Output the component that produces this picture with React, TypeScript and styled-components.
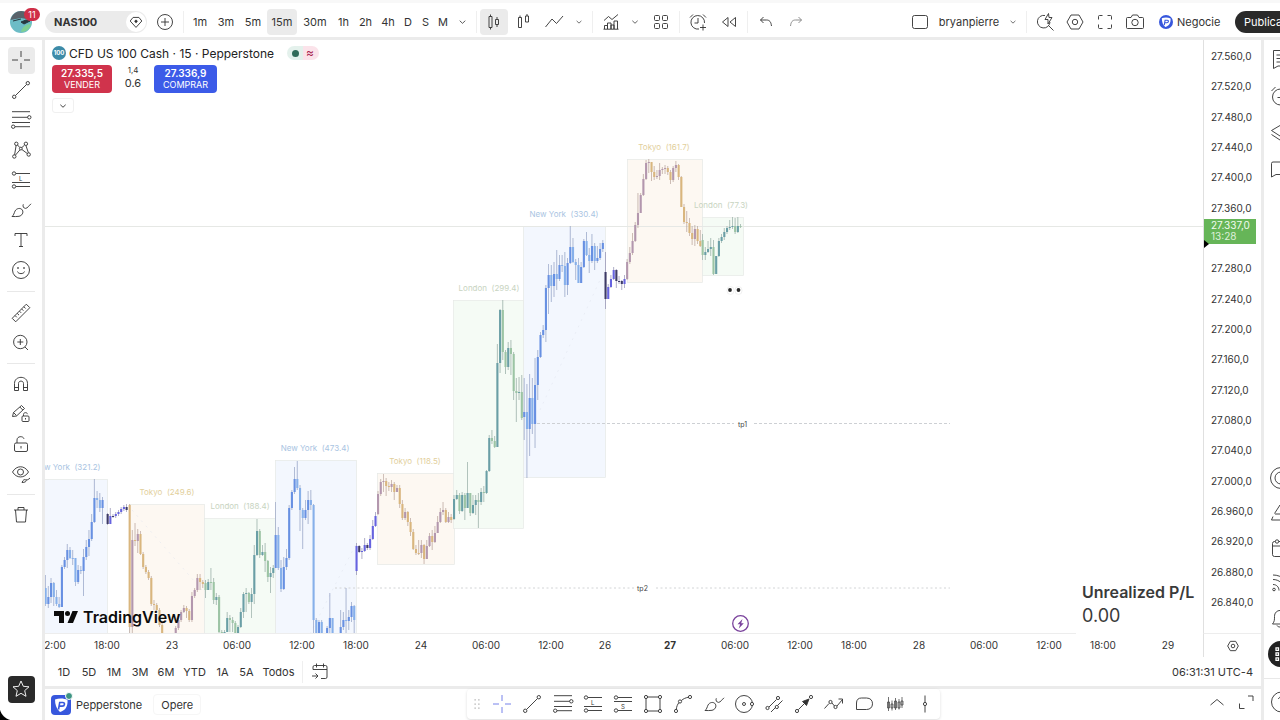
import React from "react";
import styled, { createGlobalStyle, css } from "styled-components";

const GlobalStyle = createGlobalStyle`
  * { box-sizing: border-box; }
  html, body { margin: 0; padding: 0; }
  body {
    background: #ebebeb;
    color: #333;
    font-family: Inter, "Liberation Sans", sans-serif;
    font-size: 11px;
    overflow: hidden;
  }
  button { font: inherit; color: inherit; background: none; border: 0; padding: 0; margin: 0; cursor: pointer; }
`;

/* ---------- shell ---------- */

const Shell = styled.div`
  display: flex;
  flex-direction: column;
  height: 100vh;
  background: #ebebeb;
`;

const Workspace = styled.div`
  display: flex;
  flex: 1;
  min-height: 0;
  gap: 3px;
  padding-top: 3px;
`;

const Center = styled.main`
  display: flex;
  flex: 1;
  min-width: 0;
  flex-direction: column;
  gap: 3px;
`;

/* ---------- top bar ---------- */

const TopBar = styled.header`
  display: flex;
  align-items: center;
  height: 37px;
  padding-top: 3px;
  background: #fff;
  border-top: 3px solid #f8f8f8;
  overflow: hidden;
`;

const Tool = styled.button<{ $w?: number; $active?: boolean; $faded?: boolean }>`
  display: inline-flex;
  flex: none;
  align-items: center;
  justify-content: center;
  width: ${(p) => p.$w ?? 28}px;
  height: 26px;
  border-radius: 4px;
  white-space: nowrap;
  background: ${(p) => (p.$active ? "#ebebeb" : "transparent")};
  opacity: ${(p) => (p.$faded ? 0.6 : 1)};
`;

const Sep = styled.span<{ $side?: number }>`
  flex: none;
  width: 1px;
  height: 22px;
  margin: 0 ${(p) => p.$side ?? 4}px;
  background: #efefef;
`;

const Cluster = styled.div<{ $gap?: number; $left?: number }>`
  display: flex;
  align-items: center;
  gap: ${(p) => p.$gap ?? 0}px;
  margin-left: ${(p) => p.$left ?? 0}px;
`;

const Spacer = styled.span`
  flex: 1;
`;

const Account = styled.button`
  position: relative;
  flex: none;
  width: 45px;
  height: 26px;
  padding-left: 9px;
  text-align: left;
  svg { display: block; }
`;

const Count = styled.span`
  position: absolute;
  left: 24px;
  top: -1px;
  min-width: 16px;
  height: 13px;
  border-radius: 7px;
  background: #cf2f48;
  color: #fff;
  font-size: 9px;
  line-height: 13px;
  text-align: center;
`;

const SymbolPill = styled.button`
  display: flex;
  flex: none;
  align-items: center;
  justify-content: space-between;
  width: 102px;
  height: 22px;
  padding: 0 1px 0 9px;
  border-radius: 11px;
  background: #ebebeb;
  font-weight: 700;
`;

const GemSpot = styled.span`
  display: flex;
  align-items: center;
  justify-content: center;
  width: 20px;
  height: 20px;
  border-radius: 10px;
  background: #fff;
`;

const Negotiate = styled.button`
  display: flex;
  flex: none;
  align-items: center;
  gap: 4px;
  width: 70px;
  height: 24px;
  margin: 0 6px 0 10px;
`;

const Publish = styled.button`
  flex: none;
  width: 45px;
  height: 22px;
  padding-left: 9px;
  border-radius: 11px 0 0 11px;
  background: #2a2a2a;
  color: #fff;
  text-align: left;
  white-space: nowrap;
  overflow: hidden;
`;

/* ---------- side rails ---------- */

const LeftRail = styled.nav`
  display: flex;
  flex: none;
  flex-direction: column;
  align-items: center;
  width: 42px;
  padding: 5px 0 16px;
  background-color: #fff;
  background-image: radial-gradient(circle at 14px 0, transparent 14px, #000 15px);
  background-position: left bottom;
  background-size: 14px 14px;
  background-repeat: no-repeat;
`;

const RailTool = styled.button`
  display: flex;
  flex: none;
  align-items: center;
  justify-content: center;
  width: 42px;
  height: 30px;
`;

const RailFace = styled.span<{ $tone?: "soft" | "dark" }>`
  display: flex;
  align-items: center;
  justify-content: center;
  width: 27px;
  height: 27px;
  border-radius: 4px;
  ${(p) => p.$tone === "soft" && css`background: #ebebeb;`}
  ${(p) => p.$tone === "dark" && css`background: #2a2a2a; color: #fff;`}
`;

const RailRule = styled.hr<{ $room?: number }>`
  flex: none;
  width: 28px;
  height: 1px;
  margin: ${(p) => p.$room ?? 5}px 0;
  border: 0;
  background: #e8e8e8;
`;

const RightRail = styled.nav`
  display: flex;
  flex: none;
  flex-direction: column;
  width: 16px;
  background: #fff;
  overflow: hidden;
`;

const RailGroup = styled.div`
  display: flex;
  flex-direction: column;
`;

const SideTool = styled.button<{ $h?: number }>`
  display: flex;
  align-items: center;
  width: 32px;
  height: ${(p) => p.$h ?? 37}px;
  padding-left: 4px;
`;

const MoreDot = styled.span`
  display: flex;
  flex: none;
  align-items: center;
  justify-content: center;
  width: 26px;
  height: 26px;
  border-radius: 13px;
  background: #222;
  color: #fff;
`;

/* ---------- chart card ---------- */

const ChartCard = styled.section`
  display: flex;
  flex: 1;
  min-height: 0;
  flex-direction: column;
  background: #fff;
`;

const PlotRow = styled.div`
  display: flex;
  flex: 1;
  min-height: 0;
`;

const Plot = styled.div`
  position: relative;
  flex: 1;
  min-width: 0;
  border-right: 1px solid #e0e0e0;
  border-bottom: 1px solid #ededed;
`;

const Canvas = styled.svg`
  display: block;
  width: 100%;
  height: 100%;
  overflow: hidden;
`;

const Legend = styled.div`
  position: absolute;
  left: 7px;
  top: 5px;
`;

const TitleLine = styled.div`
  display: flex;
  align-items: center;
  gap: 3px;
  height: 16px;
  font-size: 12px;
  color: #222;
`;

const IndexMark = styled.span`
  width: 14px;
  height: 14px;
  border-radius: 7px;
  background: #3d8ba8;
  color: #fff;
  font-size: 6px;
  font-weight: 700;
  line-height: 14px;
  text-align: center;
`;

const Status = styled.span`
  display: flex;
  align-items: center;
  width: 32px;
  height: 14px;
  margin-left: 10px;
  border-radius: 7px;
  background: linear-gradient(90deg, #e4f1ec 50%, #fbe3ea 50%);
`;

const OpenDot = styled.i`
  width: 7px;
  height: 7px;
  margin: 0 7px 0 5px;
  border-radius: 4px;
  background: #2f6b59;
`;

const Delay = styled.span`
  color: #a82350;
  font-size: 12px;
  line-height: 14px;
`;

const Quotes = styled.div`
  display: flex;
  align-items: center;
  height: 28px;
  margin-top: 4px;
`;

const Quote = styled.button<{ $side: "sell" | "buy" }>`
  width: ${(p) => (p.$side === "sell" ? 60 : 63)}px;
  height: 28px;
  border-radius: 4px;
  background: ${(p) => (p.$side === "sell" ? "#d0334c" : "#3c5be8")};
  color: #fff;
  font-size: 9px;
  line-height: 11px;
  b { display: block; font-size: 10px; font-weight: 600; }
`;

const Spread = styled.div`
  width: 42px;
  text-align: center;
  font-size: 11px;
  line-height: 15px;
  small { display: block; margin-top: -3px; font-size: 8px; line-height: 12px; }
`;

const Fold = styled.button`
  display: flex;
  align-items: center;
  justify-content: center;
  width: 22px;
  height: 15px;
  margin-top: 5px;
  border: 1px solid #f0f0f0;
  border-radius: 3px;
  background: #fff;
`;

const Brand = styled.a`
  position: absolute;
  left: 9px;
  bottom: 6px;
  display: flex;
  align-items: center;
  gap: 4px;
  color: #0c0c0c;
  font-size: 16px;
  font-weight: 600;
  line-height: 20px;
  text-decoration: none;
`;

const Profit = styled.div`
  position: absolute;
  right: 0;
  bottom: -1px;
  width: 127px;
  height: 54px;
  padding-left: 6px;
  background: #fff;
  font-size: 18px;
  line-height: 22px;
  color: #3a3a3a;
  strong { display: block; font-size: 16px; font-weight: 600; line-height: 25px; white-space: nowrap; }
`;

const PriceAxis = styled.div`
  position: relative;
  display: flex;
  flex: none;
  flex-direction: column;
  justify-content: space-between;
  width: 57px;
  padding: 9px 0 23px 7px;
  border-bottom: 1px solid #ededed;
  font-size: 10px;
  line-height: 15px;
`;

const PriceSlot = styled.span`
  height: 15px;
`;

const LastPrice = styled.div`
  position: absolute;
  left: 0;
  top: 179px;
  width: 52px;
  height: 25px;
  padding: 1px 0 0 7px;
  background: #66b558;
  color: #f2fbf0;
  font-size: 10px;
  line-height: 11px;
  span { display: block; opacity: 0.85; }
`;

const AxisArrow = styled.svg`
  position: absolute;
  left: 0;
  top: 199px;
`;

const TimeRow = styled.div`
  display: flex;
  flex: none;
  height: 23px;
`;

const TimeAxis = styled.div`
  display: flex;
  flex: 1;
  min-width: 0;
  padding-left: 8px;
  overflow: hidden;
  border-right: 1px solid #e0e0e0;
  font-size: 10px;
  line-height: 23px;
`;

const Tick = styled.span<{ $w: number; $strong?: boolean }>`
  flex: 0 0 ${(p) => p.$w}px;
  font-weight: ${(p) => (p.$strong ? 700 : 400)};
  span { display: inline-block; transform: translateX(-50%); }
`;

const AxisGear = styled.button`
  display: flex;
  flex: none;
  align-items: center;
  justify-content: center;
  width: 57px;
`;

const RangeRow = styled.div`
  display: flex;
  flex: none;
  align-items: center;
  height: 29px;
  padding: 0 8px 0 6px;
`;

const Clock = styled.button`
  white-space: nowrap;
`;

/* ---------- bottom bar ---------- */

const BottomBar = styled.footer`
  display: flex;
  flex: none;
  height: 31px;
  background: #fff;
`;

const Broker = styled.div`
  display: flex;
  flex: none;
  align-items: center;
  width: 422px;
  padding-left: 5px;
`;

const BrokerName = styled.button`
  display: flex;
  align-items: center;
  gap: 4px;
`;

const Operate = styled.button`
  width: 48px;
  height: 21px;
  margin-left: 11px;
  border: 1px solid #f6f6f6;
  border-radius: 4px;
`;

const Favorites = styled.div`
  display: flex;
  flex: none;
  align-items: center;
  justify-content: space-between;
  width: 473px;
  height: 30px;
  border-radius: 4px;
  background: #fff;
  box-shadow: 0 1px 3px rgba(0, 0, 0, 0.14);
`;

const FavTool = styled(Tool)<{ $blue?: boolean }>`
  color: ${(p) => (p.$blue ? "#6a76e8" : "inherit")};
`;

/* ---------- icons ---------- */

const Svg = ({ children, size = 24 }: { children: React.ReactNode; size?: number }) => (
  <svg width={size} height={size} viewBox="0 0 24 24" fill="none" stroke="currentColor" strokeWidth={22 / size} strokeLinecap="butt" aria-hidden="true">
    {children}
  </svg>
);

const icons: Record<string, React.ReactNode> = {
  cross: <path d="M12 3v6M12 15v6M3 12h6M15 12h6" />,
  trend: <><circle cx="5.2" cy="18.8" r="1.7" /><circle cx="18.8" cy="5.2" r="1.7" /><path d="M6.5 17.500l11-11" /></>,
  fib: <><path d="M3 3.700h18M3 9.300h15.600M3 14.500h18M6 18.700h15" /><circle cx="20.300" cy="9.300" r="1.700" /><circle cx="4.200" cy="18.700" r="1.700" /></>,
  pattern: <><path d="M5.600 16.800l1.500-9.300M8.500 7l2.300 2.500M12.800 9.600l2.700-2.400M17 7.800l2.400 7M6.400 17.200l4.600-5.400M12.900 11.500l5.600 4.200" /><circle cx="5.300" cy="18.500" r="1.700" /><circle cx="7.300" cy="5.800" r="1.700" /><circle cx="11.800" cy="10.600" r="1.400" /><circle cx="16.900" cy="5.800" r="1.700" /><circle cx="19.700" cy="16.500" r="1.700" /></>,
  long: <><path d="M7 5.500h14M3 14.500h18M7 18.500h14" /><circle cx="5" cy="5.500" r="1.700" /><circle cx="5" cy="18.500" r="1.700" /><text x="10" y="12.500" fontSize="6" fill="currentColor" stroke="none">L</text></>,
  short: <><path d="M7 5.500h14M3 9.500h18M7 18.500h14" /><circle cx="5" cy="5.500" r="1.700" /><circle cx="5" cy="18.500" r="1.700" /><text x="10" y="16.500" fontSize="6" fill="currentColor" stroke="none">S</text></>,
  brush: <path d="M3 18.500c1.800-1.400 2-3.200 3-5.400 1.500-3 5.800-3.600 7.400-1 1.400 2.600-.4 5.600-3.400 6.200-2.300.4-4.500.2-7 .2zM14.300 6.300c-.8 2 .2 4 2.200 4.100 2.200-.2 3.600-3 5.500-4.600" />,
  text: <path d="M6 8V5.500h12V8M12 5.500v13M10 18.500h4" />,
  smile: <><circle cx="12" cy="12" r="8.500" /><path d="M8.500 13.500c.6 2.800 6.400 2.800 7 0" /><path d="M9 9.200v1.600M15 9.200v1.600" strokeWidth="1.500" /></>,
  ruler: <><path d="M3.200 17.300L17.300 3.200l3.500 3.500L6.700 20.800z" strokeLinejoin="round" /><path d="M6 14.500l1.800 1.800M8.200 12.300l1.800 1.800M10.400 10.100l1.800 1.800M12.600 7.900l1.800 1.800M14.800 5.700l1.800 1.800" /></>,
  zoom: <><circle cx="11.300" cy="11" r="6.700" /><path d="M16 16l3 3M11.300 8v6M8.300 11h6" /></>,
  magnet: <path d="M5.500 18.500v-7c0-8.200 13-8.200 13 0v7h-4v-7c0-3.200-5-3.200-5 0v7zM5.500 15.500h4M14.500 15.500h4" />,
  pencilLock: <><path d="M3.500 14.500l1-4L12.500 3.500l3 3-8 7.500zM10.800 5l3 3M4.500 10.500l3 3" /><rect x="13" y="14" width="7" height="5.500" rx="1" /><path d="M14.500 14v-1.500c0-2.400 3.600-2.400 4-.4M16.500 16v1.500" /></>,
  lock: <><rect x="5.500" y="11" width="13" height="8.500" rx="1.500" /><path d="M8 11V8c0-4 6-4.400 7-1.200M12 14v2.500" /></>,
  eye: <><path d="M3.500 10c4-7 12-7 16 0-4 6.600-12 6.600-16 0z" /><circle cx="11.500" cy="10" r="3" /><path d="M13 20.500c1-2.800 2.600-3.400 3.800-2.600s0 2.600-3.800 2.600zM17 17.500c1 1 2.500 0 4-1.500" /></>,
  trash: <path d="M5 7h14M6.500 7l1 12h9l1-12M9 7V4.500h6V7" />,
  star: <path d="M12 4l2.300 5.300 5.700.5-4.300 3.800 1.300 5.700-5-3-5 3 1.300-5.700L4 9.800l5.700-.5z" />,
  plus: <><circle cx="12" cy="12" r="7.500" /><path d="M12 8v8M8 12h8" /></>,
  gem: <><path d="M8.500 6.500h7l3.500 4.300-7 7.700-7-7.700z" strokeLinejoin="round" /><path d="M12 9l2.200 2.200L12 13.400l-2.200-2.200z" fill="currentColor" stroke="none" /></>,
  chevron: <path d="M8.800 10.500l3.200 3 3.200-3" />,
  up: <path d="M5.500 15l6.500-5.500L18.500 15" />,
  candles: <path d="M7 6.500h3v11H7zM13.500 9.500h3v5h-3zM8.500 4.500v2M8.500 17.500v2M15 7v2.500M15 14.500V17" />,
  hollow: <path d="M6.500 7.500h3v10h-3zM13.500 6h3v6h-3zM8 5.500v2M15 4v2" />,
  line: <path d="M3.500 17l6.500-8 4.500 4.500L21 6" />,
  indicators: <path d="M5 10.500l4.500-4 3.500 3L19 4.500M5.500 19v-3.500h3V19M8.500 19v-6h3.500v6M12 19v-4h3v4M15 19v-8h3.500v8M4.500 19.200h15" />,
  grid: <><rect x="5.500" y="5.500" width="5" height="5" rx="1" /><rect x="13.500" y="5.500" width="5" height="5" rx="1" /><rect x="5.500" y="13.500" width="5" height="5" rx="1" /><rect x="13.500" y="13.500" width="5" height="5" rx="1" /></>,
  alarm: <path d="M18.500 13A6.800 6.800 0 1 0 13 19M12 8v5H8.500M4 7.500l3-3M20 7.500l-3-3M17 14.500v6M14 17.500h6" />,
  rewind: <path d="M11 7.500v9L5.500 12zM18.500 7.500v9L13 12z" />,
  undo: <path d="M9.500 7L6.500 10l3 3M6.500 10h6c3 0 4.500 1.800 5 6" />,
  redo: <path d="M14.500 7l3 3-3 3M17.500 10h-6c-3 0-4.500 1.800-5 6" />,
  square: <rect x="4.500" y="5.500" width="15" height="13" rx="2" />,
  searchBolt: <path d="M12 5.500a6.300 6.300 0 1 0 5 6.500M16 16l4.500 4.500M15.500 3.500l-3.500 6h3v4.500l4-6.500h-3z" />,
  gear: <><path d="M8 5h8l4 7-4 7H8l-4-7z" strokeLinejoin="round" /><circle cx="12" cy="12" r="2.700" /></>,
  full: <path d="M5.500 9.500v-3a1 1 0 0 1 1-1h3M14.500 5.500h3a1 1 0 0 1 1 1v3M18.500 14.500v3a1 1 0 0 1-1 1h-3M9.500 18.500h-3a1 1 0 0 1-1-1v-3" />,
  camera: <><path d="M4.500 7.500H8l1.500-2.500h5L16 7.500h3.500a1 1 0 0 1 1 1v9a1 1 0 0 1-1 1h-15a1 1 0 0 1-1-1v-9a1 1 0 0 1 1-1z" /><circle cx="12" cy="12.500" r="3.200" /></>,
  calendarGo: <path d="M5 9.500V7a1.500 1.500 0 0 1 1.500-1.500h11A1.500 1.500 0 0 1 19 7v10a1.500 1.500 0 0 1-1.500 1.500H13M5 9.500h14M8.500 3.500v4M15.500 3.500v4M4 16h6M7.500 13.500L10 16l-2.500 2.500" />,
  rect: <><path d="M6.500 5h11M6.500 19h11M5 6.500v11M19 6.500v11" /><circle cx="5" cy="5" r="1.600" /><circle cx="19" cy="5" r="1.600" /><circle cx="5" cy="19" r="1.600" /><circle cx="19" cy="19" r="1.600" /></>,
  curve: <><circle cx="5" cy="19" r="1.600" /><circle cx="9" cy="9.500" r="1.600" /><circle cx="19" cy="5" r="1.600" /><path d="M5.300 17.400c.3-3 1.200-5 2.600-6.700M10.400 8.500c2-1.800 4.300-2.700 7-3.300" /></>,
  circle: <><circle cx="12" cy="12" r="8.500" /><circle cx="12" cy="12" r="1.500" /><circle cx="20" cy="12" r="1.600" fill="#fff" /></>,
  channel: <><path d="M7 15l7.500-7.500M9 20l4.500-4.500M16 13l4.500-4.500" /><circle cx="5.500" cy="16" r="1.600" /><circle cx="16" cy="6" r="1.600" /><circle cx="14.800" cy="15" r="1.600" /></>,
  arrow: <><circle cx="5" cy="19" r="1.600" /><circle cx="19" cy="5" r="1.600" /><path d="M6.300 17.700l6-6" /><path d="M17 7l-2.500 6.500-4-4z" fill="currentColor" /></>,
  path: <><path d="M2.500 16.500l4.500-5M10 11l2.500 3M15 14l5.500-6.500M16.500 7h4v4.500" /><circle cx="8.500" cy="10" r="1.600" /><circle cx="13.500" cy="15" r="1.600" /></>,
  callout: <path d="M4.500 17.500V11c0-3.500 2-5 5-5h5c4 0 6 2.500 6 5.800 0 3.500-2.400 5.700-6 5.700z" />,
  bars: <path d="M5.500 5v14M9 8.500v10M12.500 6v12M16 7v10.500M19 5v11M4.500 10h2v6h-2zM8 12h2v4H8zM11.500 9h2v7h-2zM15 10h2v6h-2zM18 9h2v4h-2z" strokeWidth="0.700" />,
  vline: <><path d="M12 3.500v7M12 13.500v7" /><circle cx="12" cy="12" r="1.600" /></>,
  grip: <path d="M9 7h1.500M13.500 7H15M9 12h1.500M13.500 12H15M9 17h1.500M13.500 17H15" strokeWidth="1.500" stroke="#aaa" />,
  list: <path d="M5.500 3.500h14V19H10l-4.500 2.500zM8.500 8h8M8.500 11.500h8M8.500 15h8" />,
  bellClock: <><circle cx="12.500" cy="13" r="8" /><path d="M3.500 7l4-4M9.500 13.500h3V8" /></>,
  layers: <path d="M12 4.500l8.500 5L12 15 3.500 9.500zM3.500 13.500L12 19l8.500-5.500" />,
  chat: <path d="M3.500 19V5.500a1.500 1.500 0 0 1 1.500-1.500h14v12.500H8z" />,
  target: <><circle cx="13" cy="12" r="10.500" /><circle cx="13" cy="12" r="6" /></>,
  pyramid: <path d="M12 4l8.500 15h-17L5 15.500M6.500 12.500L12 4M7 13h9" />,
  calendar: <><rect x="4.500" y="5.500" width="16" height="15" rx="2" /><path d="M4.500 10h16" /><circle cx="9" cy="5.500" r="1.700" fill="#fff" /></>,
  feed: <><circle cx="6" cy="18.500" r="1.300" /><path d="M5 13.500c3.500 0 6 2.500 6 6M5 8.500c6 0 11 4 11 11M5 4c9 0 15 6 15 15" /></>,
  bell: <path d="M4.500 18c2-2.500 2-4 2-7.500 0-8 11-8 11 0 0 3.500 0 5 2 7.500zM9 19.500c1 2 5 2 6 0" />,
  more: <path d="M6 4.500h3v3H6zM6 10.500h3v3H6zM6 16.500h3v3H6zM13 4.500h3v3h-3zM13 10.500h3v3h-3zM13 16.500h3v3h-3z" strokeWidth="1.500" />,
  help: <><circle cx="13.500" cy="12" r="10" /><path d="M10.500 9c.5-3 6-3 6 .5 0 2.500-3 2.500-3 5M13.500 17v1.500" /></>,
  expand: <path d="M14 6h5v5M5.500 13.500v5h5" />,
};

const Icon = ({ name, size }: { name: string; size?: number }) => <Svg size={size}>{icons[name]}</Svg>;

const Shield = ({ size, round }: { size: number; round?: boolean }) => (
  <svg width={size} height={size} viewBox="0 0 20 20" aria-hidden="true">
    <rect width="20" height="20" rx={round ? 10 : 4} fill="#3757dd" />
    <path d="M4 4.500c4-1.500 9-1.500 12.500.5C17 11 14.500 15.500 9 17 5.500 14 4 9.500 4 4.500z" fill="#fff" />
    <path d="M7.500 14.500l1.200-7h3.100c2.400 0 2.200 3.600-.6 3.600H8.400" fill="none" stroke="#3757dd" strokeWidth="1.600" />
  </svg>
);

const BrokerMark = styled.span`
  position: relative;
  display: flex;
  padding: 1px;
  &::after {
    content: "";
    position: absolute;
    right: -1px;
    top: -2px;
    width: 6px;
    height: 6px;
    border: 1px solid #fff;
    border-radius: 4px;
    background: #3d9482;
    box-sizing: content-box;
  }
`;

/* ---------- market data ---------- */

type Zone = "york" | "tokyo" | "london" | "off";
type Bar = number | [number, number, number];

const palette: Record<Zone, { up: string; down: string; wick: string; fill: string; label: string }> = {
  york: { up: "#6790e2", down: "#86b0ea", wick: "#8596bd", fill: "#f3f7fe", label: "#a9c4e2" },
  tokyo: { up: "#b397ae", down: "#d9b67e", wick: "#b0988f", fill: "#fdf8f2", label: "#e2cf9c" },
  london: { up: "#6a9fa6", down: "#9cc4a4", wick: "#86a098", fill: "#f5fbf5", label: "#c8d4c1" },
  off: { up: "#6663df", down: "#3d3a66", wick: "#8582aa", fill: "#fff", label: "#999" },
};

const sessions: { zone: Zone; x: number; y: number; w: number; h: number; label: string; lx: number }[] = [
  { zone: "york", x: 20, y: 479, w: 87, h: 180, label: "New York  (321.2)", lx: 67 },
  { zone: "tokyo", x: 129, y: 504, w: 75, h: 160, label: "Tokyo  (249.6)", lx: 167 },
  { zone: "london", x: 204, y: 518, w: 71, h: 140, label: "London  (188.4)", lx: 240 },
  { zone: "york", x: 275, y: 460, w: 81, h: 190, label: "New York  (473.4)", lx: 315 },
  { zone: "tokyo", x: 377, y: 473, w: 77, h: 91, label: "Tokyo  (118.5)", lx: 415 },
  { zone: "london", x: 453, y: 300, w: 70, h: 228, label: "London  (299.4)", lx: 489 },
  { zone: "york", x: 523, y: 226, w: 82, h: 251, label: "New York  (330.4)", lx: 564 },
  { zone: "tokyo", x: 627, y: 159, w: 75, h: 123, label: "Tokyo  (161.7)", lx: 664 },
  { zone: "london", x: 702, y: 217, w: 41, h: 58, label: "London  (77.3)", lx: 721 },
];

/* Each bar is a close, or [close, high, low]; it opens at the previous close. */
const runs: { zone: Zone; x: number; open: number; bars: Bar[] }[] = [
  { zone: "york", x: 44.600, open: 588, bars: [[604, 575, 606], [597, 586, 608], [583, 578, 603], [597, 582, 606], [604, 590, 606], [607, 597, 608], [567, 565, 607], [560, 557, 569], [550, 544, 568], [558, 547, 559], [558, 550, 565], [582, 559, 586], [570, 565, 584], [571, 566, 574], [557, 549, 596], [547, 540, 560], [539, 530, 556], [522, 514, 541], [498, 479, 523], [500, 491, 508], [508, 493, 512], [500, 497, 524]] },
  { zone: "off", x: 106.600, open: 514, bars: [[524, 513, 525], [516, 508, 517], 516, 514, 512, 509, 507, [510, 504, 512]] },
  { zone: "tokyo", x: 128.600, open: 505, bars: [[627, 504, 640], [540, 530, 640], [541, 523, 546], [534, 529, 553], [554, 531, 555], 567, 572, 578, 604, [605, 600, 610], 610, 625, 640, 650, 655, 650, 642, 628, 620, 612, [608, 605, 613], [611, 606, 618], 620, [596, 592, 622], 590, [578, 574, 592], [582, 574, 590], [584, 580, 588]] },
  { zone: "london", x: 204.500, open: 583, bars: [[590, 580, 598], [582, 579, 590], [582, 568, 590], [600, 578, 604], [597, 593, 605], 632, 650, 632, [618, 612, 632], [620, 615, 632], [623, 617, 632], 636, 627, [612, 608, 628], [594, 592, 618], [593, 588, 612], [602, 592, 604], [594, 588, 618], [555, 545, 604], [531, 519, 556], [555, 529, 558], [552, 545, 556], [561, 543, 572], [577, 560, 582], [573, 567, 593], [568, 565, 578]] },
  { zone: "york", x: 274.600, open: 568, bars: [[535, 502, 568], [568, 527, 570], [589, 560, 592], [567, 557, 590], [558, 549, 570], [508, 505, 560], [492, 490, 510], [479, 467, 494], [488, 461, 490], [510, 485, 531], [518, 508, 549], [510, 500, 520], [500, 491, 524], [505, 490, 510], [620, 504, 640], 636, [622, 620, 640], [640, 620, 642], 640, 628, [618, 593, 640], [638, 618, 645], 645, 642, [627, 610, 640], [620, 612, 630], [621, 588, 640], [617, 610, 630], [606, 602, 622], [620, 605, 640]] },
  { zone: "off", x: 355.500, open: 571, bars: [[546, 543, 575], [552, 545, 553], [551, 548, 559], [545, 538, 552], [548, 543, 550], [539, 535, 550], [526, 520, 540], [516, 512, 527]] },
  { zone: "tokyo", x: 377, open: 514, bars: [[494, 491, 515], [482, 479, 496], [481, 474, 492], [486, 478, 496], [487, 482, 491], [484, 480, 492], [492, 482, 500], [488, 485, 492], [504, 485, 508], [518, 500, 520], [512, 508, 520], [522, 511, 526], [532, 518, 536], [549, 529, 550], [553, 545, 555], [553, 540, 555], [545, 540, 558], [559, 544, 564], [546, 540, 559], [536, 533, 547], [542, 530, 550], [533, 526, 543], [522, 516, 533], [512, 508, 523], [510, 502, 515], [522, 508, 523], [517, 512, 523], [520, 514, 523]] },
  { zone: "london", x: 453, open: 519, bars: [[499, 495, 520], [495, 490, 500], [511, 493, 514], [495, 492, 512], [508, 493, 520], [493, 462, 508], [513, 493, 516], [505, 495, 514], [500, 495, 515], [502, 493, 528], [492, 488, 505], [493, 486, 502], [471, 470, 494], [438, 435, 472], [441, 430, 444], [447, 436, 448], [363, 344, 447], [310, 309, 373], [352, 300, 360], [367, 350, 374], [348, 342, 370], [354, 340, 375], [391, 352, 400], [393, 378, 422], [392, 377, 400], [418, 375, 420]] },
  { zone: "york", x: 523.200, open: 417, bars: [[412, 378, 440], [429, 384, 478], [398, 374, 456], [424, 378, 434], [385, 358, 448], [357, 350, 400], [335, 332, 358], [330, 325, 338], [288, 285, 342], [275, 264, 314], [286, 265, 302], [274, 262, 297], [279, 250, 290], [265, 255, 281], [266, 255, 272], [285, 252, 297], [263, 258, 295], [247, 226, 264], [262, 238, 263], [265, 259, 280], [283, 258, 283], [267, 262, 283], [241, 239, 268], [255, 232, 256], [261, 248, 273], [246, 234, 263], [261, 243, 270], [258, 246, 263], [249, 243, 260], [243, 240, 252]] },
  { zone: "off", x: 604.500, open: 272, bars: [[299, 252, 309], [287, 284, 299], [279, 275, 288], [270, 267, 280], [281, 269, 288], [281, 276, 284], [284, 280, 290], [279, 275, 288]] },
  { zone: "tokyo", x: 626.100, open: 279, bars: [[262, 259, 280], [253, 247, 264], [241, 233, 255], [225, 222, 242], [213, 193, 228], [195, 193, 213], [179, 174, 196], [163, 160, 180], [162, 159, 173], [172, 162, 181], [177, 166, 180], [176, 170, 179], [170, 163, 180], [169, 167, 174], [168, 165, 174], [172, 166, 175], [180, 170, 184], [168, 166, 182], [165, 161, 172], [177, 164, 180], [207, 176, 207], [222, 204, 224], [223, 211, 232], [233, 218, 236], [239, 226, 245], [229, 225, 246], [241, 226, 244], [246, 230, 247]] },
  { zone: "london", x: 701.600, open: 240, bars: [[255, 234, 260], [252, 247, 260], [249, 241, 253], [247, 238, 256], [274, 240, 275], [256, 256, 274], [241, 238, 257], [237, 234, 243], [232, 228, 240], [228, 226, 234], [227, 220, 230], [226, 217, 229], [232, 218, 234], [226, 217, 233], [226, 224, 228]] },
];

const PITCH = 2.71;

const Candles = () => (
  <g>
    {runs.map((run, r) => {
      const tone = palette[run.zone];
      let open = run.open;
      return run.bars.map((bar, i) => {
        const start = open;
        const [close, high, low] = Array.isArray(bar) ? bar : [bar, Math.min(open, bar) - 2, Math.max(open, bar) + 2];
        open = close;
        const x = run.x + i * PITCH;
        const color = close < start ? tone.up : tone.down;
        return (
          <g key={`${r}-${i}`}>
            <path d={`M${x + 1} ${high}V${low}`} stroke={tone.wick} strokeWidth="0.800" opacity="0.800" />
            <rect x={x} y={Math.min(start, close)} width="2.100" height={Math.max(1, Math.abs(close - start))} fill={color} />
          </g>
        );
      });
    })}
  </g>
);

const Market = () => (
  <Canvas role="img" aria-label="CFD US 100 Cash">
    <g transform="translate(-45 -40)" fontFamily="Inter, sans-serif">
      {sessions.map((s) => (
        <g key={s.label}>
          <rect x={s.x + 0.5} y={s.y + 0.5} width={s.w} height={s.h} fill={palette[s.zone].fill} stroke="#e6e9e6" strokeWidth="0.700" />
          <text x={s.lx} y={s.y - 9} textAnchor="middle" fontSize="8" fill={palette[s.zone].label} style={{ whiteSpace: "pre" }}>{s.label}</text>
        </g>
      ))}
      <path d="M45 226.500H1204" stroke="#e6e8e5" />
      <path d="M310 634l46-90M540 410l60-130M132 510l70 80" stroke="#dfe3ec" strokeWidth="0.500" strokeDasharray="2 5" />
      <path d="M537 423.500H734M754 423.500H950" stroke="#cdd0d4" strokeDasharray="3 2" />
      <path d="M335 588H634M656 588H950" stroke="#d2d4d6" strokeDasharray="2 2.500" />
      <text x="742.500" y="426.500" textAnchor="middle" fontSize="7" fill="#444">tp1</text>
      <text x="642.500" y="590.500" textAnchor="middle" fontSize="7" fill="#444">tp2</text>
      <Candles />
      <g>
        <ellipse cx="730.500" cy="290.500" rx="3.600" ry="4" fill="#fff" stroke="#eee" strokeWidth="0.800" />
        <ellipse cx="738.500" cy="290.500" rx="3.600" ry="4" fill="#fff" stroke="#eee" strokeWidth="0.800" />
        <circle cx="730" cy="290" r="1.900" fill="#2a2a2a" />
        <circle cx="738.500" cy="290" r="1.900" fill="#2a2a2a" />
      </g>
      <circle cx="740.500" cy="623.500" r="7.800" fill="#fff" stroke="#7a429c" strokeWidth="1.300" />
      <path d="M742.500 619l-5 5.200h2.600l-1.300 4.300 5-5.200h-2.600z" fill="#7a429c" />
    </g>
  </Canvas>
);

const prices = ["27.560,0", "27.520,0", "27.480,0", "27.440,0", "27.400,0", "27.360,0", "", "27.280,0", "27.240,0", "27.200,0", "27.160,0", "27.120,0", "27.080,0", "27.040,0", "27.000,0", "26.960,0", "26.920,0", "26.880,0", "26.840,0"];

const ticks: [string, number][] = [
  ["12:00", 54], ["18:00", 65], ["23", 65], ["06:00", 65], ["12:00", 54], ["18:00", 65], ["24", 65], ["06:00", 65], ["12:00", 54],
  ["26", 65], ["27", 65], ["06:00", 65], ["12:00", 54], ["18:00", 65], ["28", 65], ["06:00", 65], ["12:00", 54], ["18:00", 65], ["29", 30],
];

const intervals: [string, number][] = [["1m", 26], ["3m", 26], ["5m", 28], ["15m", 30], ["30m", 36], ["1h", 21], ["2h", 23], ["4h", 22], ["D", 18], ["S", 17], ["M", 18]];
const ranges: [string, number][] = [["1D", 26], ["5D", 24], ["1M", 26], ["3M", 26], ["6M", 26], ["YTD", 31], ["1A", 25], ["5A", 23], ["Todos", 41]];
const favorites = ["cross", "trend", "fib", "long", "short", "rect", "curve", "brush", "circle", "channel", "arrow", "path", "callout", "bars", "vline"];

const Rail = ({ names }: { names: string[] }) => (
  <>
    {names.map((n) => (
      <RailTool key={n} aria-label={n}>
        <RailFace $tone={n === "cross" ? "soft" : undefined}><Icon name={n} /></RailFace>
      </RailTool>
    ))}
  </>
);

export default function App() {
  return (
    <Shell>
      <GlobalStyle />
      <TopBar>
        <Account aria-label="Account">
          <svg width="24" height="24" viewBox="0 0 24 24">
            <circle cx="12" cy="12" r="11" fill="#6cbcc6" />
            <path d="M1.500 10C3 4 8 1 12 1c6 0 10 4 11 9L12 8z" fill="#59636b" />
            <path d="M12 22c1-5 5-8 10-8-1 5-5 8-10 8z" fill="#7ed093" />
            <path d="M12 12l5-2 4 1-6 3zM4 11l8-2" fill="#27383f" stroke="#27383f" />
          </svg>
          <Count>11</Count>
        </Account>
        <SymbolPill>NAS100<GemSpot><Icon name="gem" size={20} /></GemSpot></SymbolPill>
        <Tool $w={36} aria-label="Compare"><Icon name="plus" /></Tool>
        <Sep $side={0} />
        <Cluster $left={3}>
          {intervals.map(([label, w]) => <Tool key={label} $w={w} $active={label === "15m"}>{label}</Tool>)}
          <Tool $w={21} aria-label="Intervals"><Icon name="chevron" /></Tool>
        </Cluster>
        <Sep $side={3} />
        <Cluster $gap={2}>
          <Tool $active aria-label="Candles"><Icon name="candles" /></Tool>
          <Tool aria-label="Hollow candles"><Icon name="hollow" /></Tool>
          <Tool aria-label="Line"><Icon name="line" /></Tool>
          <Tool $w={18} aria-label="Chart types"><Icon name="chevron" /></Tool>
        </Cluster>
        <Sep $side={4} />
        <Cluster>
          <Tool $w={28} aria-label="Indicators"><Icon name="indicators" /></Tool>
          <Tool $w={20} aria-label="Favorite indicators"><Icon name="chevron" /></Tool>
          <Tool $w={31} aria-label="Templates"><Icon name="grid" /></Tool>
        </Cluster>
        <Sep $side={3} />
        <Cluster $gap={2}>
          <Tool $w={30} aria-label="Alert"><Icon name="alarm" /></Tool>
          <Tool aria-label="Replay"><Icon name="rewind" /></Tool>
        </Cluster>
        <Sep $side={4} />
        <Cluster $gap={2}>
          <Tool aria-label="Undo"><Icon name="undo" /></Tool>
          <Tool $faded aria-label="Redo"><Icon name="redo" /></Tool>
        </Cluster>
        <Spacer />
        <Tool aria-label="Layout"><Icon name="square" /></Tool>
        <Tool $w={70}>bryanpierre</Tool>
        <Tool $w={18} aria-label="Layouts"><Icon name="chevron" /></Tool>
        <Sep $side={4} />
        <Cluster $gap={2}>
          <Tool aria-label="Quick search"><Icon name="searchBolt" /></Tool>
          <Tool aria-label="Settings"><Icon name="gear" /></Tool>
          <Tool aria-label="Fullscreen"><Icon name="full" /></Tool>
          <Tool aria-label="Snapshot"><Icon name="camera" /></Tool>
        </Cluster>
        <Negotiate><Shield size={14} round />Negocie</Negotiate>
        <Publish>Publicar</Publish>
      </TopBar>

      <Workspace>
        <LeftRail>
          <Rail names={["cross", "trend", "fib", "pattern", "long", "brush", "text", "smile"]} />
          <RailRule $room={6} />
          <Rail names={["ruler", "zoom"]} />
          <RailRule />
          <Rail names={["magnet", "pencilLock", "lock", "eye"]} />
          <RailRule />
          <Rail names={["trash"]} />
          <Spacer />
          <RailTool aria-label="Favorites"><RailFace $tone="dark"><Icon name="star" /></RailFace></RailTool>
        </LeftRail>

        <Center>
          <ChartCard>
            <PlotRow>
              <Plot>
                <Market />
                <Legend>
                  <TitleLine>
                    <IndexMark>100</IndexMark>
                    CFD US 100 Cash · 15 · Pepperstone
                    <Status><OpenDot /><Delay>≈</Delay></Status>
                  </TitleLine>
                  <Quotes>
                    <Quote $side="sell"><b>27.335,5</b>VENDER</Quote>
                    <Spread><small>1,4</small>0.6</Spread>
                    <Quote $side="buy"><b>27.336,9</b>COMPRAR</Quote>
                  </Quotes>
                  <Fold aria-label="Collapse"><Icon name="chevron" size={20} /></Fold>
                </Legend>
                <Brand href="#">
                  <svg width="25" height="14" viewBox="0 0 25 14" fill="currentColor" aria-hidden="true">
                    <path d="M0 1h10v12H5V6H0z" />
                    <circle cx="13.500" cy="3.500" r="2.500" />
                    <path d="M18.500 1H24l-5 12h-5.500z" />
                  </svg>
                  TradingView
                </Brand>
                <Profit><strong>Unrealized P/L</strong>0.00</Profit>
              </Plot>
              <PriceAxis>
                {prices.map((p, i) => <PriceSlot key={i}>{p}</PriceSlot>)}
                <LastPrice>27.337,0<span>13:28</span></LastPrice>
                <AxisArrow width="6" height="10" viewBox="0 0 6 10"><path d="M0 1l5 4-5 4z" fill="#000" /></AxisArrow>
              </PriceAxis>
            </PlotRow>
            <TimeRow>
              <TimeAxis>
                {ticks.map(([label, w], i) => <Tick key={i} $w={w} $strong={label === "27"}><span>{label}</span></Tick>)}
              </TimeAxis>
              <AxisGear aria-label="Axis settings"><Icon name="gear" size={16} /></AxisGear>
            </TimeRow>
            <RangeRow>
              {ranges.map(([label, w]) => <Tool key={label} $w={w}>{label}</Tool>)}
              <Sep $side={3} />
              <Tool aria-label="Go to date"><Icon name="calendarGo" /></Tool>
              <Spacer />
              <Clock>06:31:31 UTC-4</Clock>
            </RangeRow>
          </ChartCard>

          <BottomBar>
            <Broker>
              <BrokerName><BrokerMark><Shield size={20} /></BrokerMark>Pepperstone</BrokerName>
              <Operate>Opere</Operate>
            </Broker>
            <Favorites>
              <Tool $w={20} aria-label="Move"><Icon name="grip" /></Tool>
              {favorites.map((n) => <FavTool key={n} $w={30} $blue={n === "cross"} aria-label={n}><Icon name={n} /></FavTool>)}
            </Favorites>
            <Spacer />
            <Tool aria-label="Open panel"><Icon name="up" /></Tool>
            <Tool $w={30} aria-label="Maximize"><Icon name="expand" /></Tool>
          </BottomBar>
        </Center>

        <RightRail>
          <RailGroup>
            {["list", "bellClock", "layers", "chat"].map((n) => <SideTool key={n} aria-label={n}><Icon name={n} /></SideTool>)}
          </RailGroup>
          <Spacer />
          <RailGroup>
            {["target", "pyramid", "calendar", "feed", "bell"].map((n) => <SideTool key={n} $h={35} aria-label={n}><Icon name={n} /></SideTool>)}
            <SideTool $h={38} aria-label="More"><MoreDot><Icon name="more" size={20} /></MoreDot></SideTool>
            <RailRule />
            <SideTool $h={36} aria-label="Help"><Icon name="help" /></SideTool>
          </RailGroup>
        </RightRail>
      </Workspace>
    </Shell>
  );
}
